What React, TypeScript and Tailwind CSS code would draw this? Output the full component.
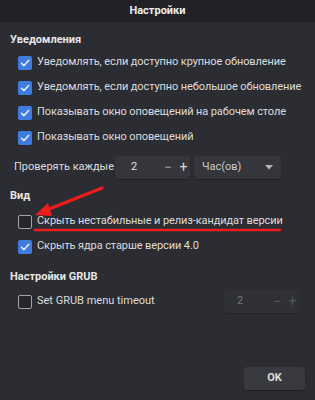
const font = { fontFamily: 'Roboto, "Liberation Sans", sans-serif' };

function Box({ checked }: { checked: boolean }) {
  if (checked) {
    return (
      <span className="flex h-[14px] w-[14px] shrink-0 items-center justify-center rounded-[2px] bg-[#3f7ce0]">
        <svg width="10" height="10" viewBox="0 0 10 10" fill="none">
          <path d="M1.5 5.2 L4 7.6 L8.6 2.4" stroke="#e8eefb" strokeWidth="1.5" strokeLinecap="round" strokeLinejoin="round" />
        </svg>
      </span>
    );
  }
  return <span className="h-[14px] w-[14px] shrink-0 rounded-[2px] border-[1.5px] border-[#a3a4a8] bg-[#26272b]" />;
}

function Check({ label, checked }: { label: string; checked: boolean }) {
  return (
    <div className="flex h-[25px] items-center gap-[5px] pl-[18px] text-[11px] tracking-[-0.1px] whitespace-nowrap text-[#dcdcdc]">
      <Box checked={checked} />
      <span>{label}</span>
    </div>
  );
}

function Title({ text, className }: { text: string; className: string }) {
  return (
    <div className={`flex h-[20px] items-center pl-[10px] text-[11px] font-bold whitespace-nowrap text-[#e6e6e6] ${className}`}>
      {text}
    </div>
  );
}

export default function App() {
  return (
    <div className="relative flex h-[400px] w-[315px] flex-col bg-[#2c2d32]" style={font}>
      <div className="flex h-[22px] shrink-0 items-center justify-center bg-[#222226] text-[11px] font-bold text-[#ececec]">
        Настройки
      </div>
      <div className="flex flex-col">
        <Title text="Уведомления" className="mt-[8px]" />
        <Check checked label="Уведомлять, если доступно крупное обновление" />
        <Check checked label="Уведомлять, если доступно небольшое обновление" />
        <Check checked label="Показывать окно оповещений на рабочем столе" />
        <Check checked label="Показывать окно оповещений" />
        <div className="mt-[6px] flex h-[23px] items-center text-[11px] whitespace-nowrap text-[#dcdcdc]">
          <span className="w-[115px] pl-[14px]">Проверять каждые</span>
          <div className="flex h-[23px] w-[75px] items-center rounded-[3px] bg-[#35363b] shadow-[0_1px_1px_rgba(0,0,0,0.25)]">
            <span className="w-[44px] pl-[16px] text-[#e4e4e4]">2</span>
            <span className="w-[18px] text-center text-[14px] text-[#9fa0a4]">−</span>
            <span className="w-[13px] text-center text-[14px] text-[#d8d8d8]">+</span>
          </div>
          <div className="ml-[4px] flex h-[23px] w-[87px] items-center justify-between rounded-[3px] bg-[#35363b] px-[8px] text-[#c9c9cc] shadow-[0_1px_1px_rgba(0,0,0,0.25)]">
            <span>Час(ов)</span>
            <svg width="8" height="5" viewBox="0 0 8 5">
              <path d="M0 0 H8 L4 4.5 Z" fill="#b4b5b8" />
            </svg>
          </div>
        </div>
        <Title text="Вид" className="mt-[7px]" />
        <div className="mt-[3px]">
          <Check checked={false} label="Скрыть нестабильные и релиз-кандидат версии" />
          <Check checked label="Скрыть ядра старше версии 4.0" />
        </div>
        <Title text="Настройки GRUB" className="mt-[8px]" />
        <div className="mt-[2px] flex h-[25px] items-center justify-between pr-[15px]">
          <div className="flex items-center gap-[5px] pl-[18px] text-[11px] whitespace-nowrap text-[#dcdcdc]">
            <Box checked={false} />
            <span>Set GRUB menu timeout</span>
          </div>
          <div className="flex h-[23px] w-[76px] items-center rounded-[3px] bg-[#303136] text-[11px] shadow-[0_1px_1px_rgba(0,0,0,0.2)]">
            <span className="w-[44px] pl-[13px] text-[#75767a]">2</span>
            <span className="w-[18px] text-center text-[14px] text-[#55565a]">−</span>
            <span className="w-[13px] text-center text-[14px] text-[#55565a]">+</span>
          </div>
        </div>
      </div>
      <div className="mt-auto mb-[10px] flex justify-end pr-[10px]">
        <button className="flex h-[23px] w-[61px] items-center justify-center rounded-[3px] bg-[#393a3f] text-[11px] font-bold text-[#dedede] shadow-[0_1px_1px_rgba(0,0,0,0.3)]">
          OK
        </button>
      </div>
      <svg className="pointer-events-none absolute left-0 top-0" width="315" height="400" viewBox="0 0 315 400">
        <line x1="102" y1="188" x2="44" y2="211" stroke="#ee1c1c" strokeWidth="3" strokeLinecap="round" />
        <path d="M35 215 L48 203 L52 216 Z" fill="#ee1c1c" />
        <line x1="35" y1="230" x2="280" y2="230" stroke="#ee1c1c" strokeWidth="2.5" strokeLinecap="round" />
      </svg>
    </div>
  );
}
